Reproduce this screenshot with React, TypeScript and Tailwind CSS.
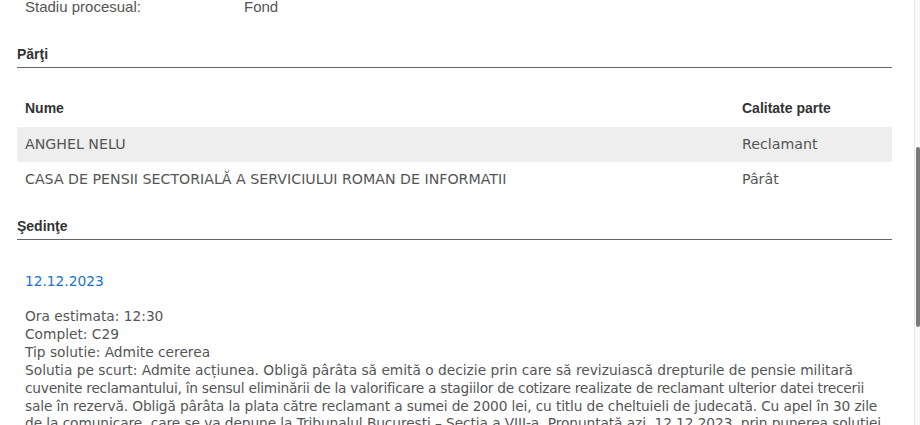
import React from 'react'

const parti = [
  { nume: 'ANGHEL NELU', calitate: 'Reclamant' },
  { nume: 'CASA DE PENSII SECTORIALĂ A SERVICIULUI ROMAN DE INFORMATII', calitate: 'Pârât' },
]

// randuri ca in original (rupte manual)
const solutie = [
  { text: 'Solutia pe scurt: Admite acțiunea. Obligă pârâta să emită o decizie prin care să revizuiască drepturile de pensie militară', cls: '' },
  { text: 'cuvenite reclamantului, în sensul eliminării de la valorificare a stagiilor de cotizare realizate de reclamant ulterior datei trecerii', cls: 'tracking-[-0.26px]' },
  { text: 'sale în rezervă. Obligă pârâta la plata către reclamant a sumei de 2000 lei, cu titlu de cheltuieli de judecată. Cu apel în 30 zile', cls: 'tracking-[-0.14px]' },
  { text: 'de la comunicare, care se va depune la Tribunalul Bucuresti – Sectia a VIII-a. Pronuntată azi, 12.12.2023, prin punerea soluţiei', cls: 'tracking-[-0.09px]' },
  { text: 'la dispoziţia părţilor prin mijlocirea grefei instanţei.', cls: '' },
]

const body = "font-['DejaVu_Sans',Verdana,sans-serif]"

const App: React.FC = () => {
  return (
    <div className="relative h-[425px] w-[920px] overflow-hidden bg-white">
      <div className="w-[875px] ml-[17px] text-[#555]">
        {/* stadiu */}
        <div className="flex h-[20px] -mt-[3px] items-center pl-[8px] text-[15px] font-['Liberation_Sans',Arial,sans-serif]">
          <span className="w-[219px]">Stadiu procesual:</span>
          <span>Fond</span>
        </div>

        {/* parti */}
        <div className="mt-[28px] border-b border-[#666] pb-[4px]">
          <h3 className="h-[18px] leading-[18px] text-[14px] font-bold text-[#333] font-['Liberation_Sans',Arial,sans-serif]">
            Părţi
          </h3>
        </div>

        <div className="mt-[29px]">
          <div className="flex h-[22px] items-center px-[8px] text-[14px] font-bold text-[#333] font-['Liberation_Sans',Arial,sans-serif]">
            <span className="flex-1">Nume</span>
            <span className="w-[142px]">Calitate parte</span>
          </div>
          <div className={`mt-[8px] text-[14.2px] ${body}`}>
            {parti.map((p, i) => (
              <div
                key={p.nume}
                className={`flex h-[35px] items-center px-[8px] ${i % 2 === 0 ? 'bg-[#eeeeee]' : ''}`}
              >
                <span className="flex-1">{p.nume}</span>
                <span className="w-[142px]">{p.calitate}</span>
              </div>
            ))}
          </div>
        </div>

        {/* sedinte */}
        <div className="mt-[20px] border-b border-[#666] pb-[4px]">
          <h3 className="h-[18px] leading-[18px] text-[14px] font-bold text-[#333] font-['Liberation_Sans',Arial,sans-serif]">
            Şedinţe
          </h3>
        </div>

        <div className={`pl-[8px] text-[13.75px] ${body}`}>
          <div className="mt-[31px] h-[20px] leading-[20px] text-[#1a73c8]">12.12.2023</div>
          <div className="mt-[17px] leading-[17.9px]">
            <div>Ora estimata: 12:30</div>
            <div>Complet: C29</div>
            <div>Tip solutie: Admite cererea</div>
            {solutie.map(line => (
              <div key={line.text} className={`whitespace-nowrap ${line.cls}`}>{line.text}</div>
            ))}
          </div>
        </div>
      </div>

      {/* scrollbar */}
      <div className="absolute right-0 top-0 h-full w-[6px] border-l border-[#e6e6e6] bg-[#fafafa]">
        <div className="absolute right-0 top-[147px] h-[180px] w-[4px] rounded-full bg-[#7a7a7a]" />
      </div>
    </div>
  )
}

export default App
